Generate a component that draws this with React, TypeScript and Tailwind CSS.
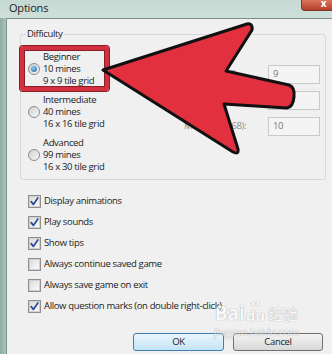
import React from "react";

function Radio({ checked }: { checked?: boolean }) {
  return (
    <span className="flex h-[12px] w-[12px] shrink-0 items-center justify-center rounded-full border border-[#8c8c8c] bg-gradient-to-br from-[#cfcfcf] to-[#f9f9f9]">
      {checked && (
        <span className="h-[6px] w-[6px] rounded-full bg-[radial-gradient(circle_at_40%_35%,#8fd0f5,#1a5a98)]" />
      )}
    </span>
  );
}

function Check({ checked }: { checked?: boolean }) {
  return (
    <span className="flex h-[13px] w-[13px] shrink-0 items-center justify-center border border-[#8f8f8f] bg-white">
      <span className="flex h-[11px] w-[11px] items-center justify-center border border-[#d0d0d0] bg-gradient-to-br from-[#dcdcdc] to-[#fbfbfb]">
        {checked && (
          <svg width="9" height="9" viewBox="0 0 9 9">
            <path d="M1.2 4.6 L3.4 7.4 L7.8 1" stroke="#2b4996" strokeWidth="1.7" fill="none" strokeLinecap="round" strokeLinejoin="round" />
          </svg>
        )}
      </span>
    </span>
  );
}

const levels = [
  { name: "Beginner", mines: "10 mines", grid: "9 x 9 tile grid", checked: true },
  { name: "Intermediate", mines: "40 mines", grid: "16 x 16 tile grid" },
  { name: "Advanced", mines: "99 mines", grid: "16 x 30 tile grid" },
];

const fields = [
  { label: "Height (9-24):", value: "9" },
  { label: "Width (9-30):", value: "" },
  { label: "Mines (10-668):", value: "10" },
];

const options = [
  { label: "Display animations", checked: true },
  { label: "Play sounds", checked: true },
  { label: "Show tips", checked: true },
  { label: "Always continue saved game" },
  { label: "Always save game on exit" },
  { label: "Allow question marks (on double right-click)", checked: true },
];

export default function App() {
  return (
    <div className="relative h-[354px] w-[332px] overflow-hidden bg-[#b7cec8] font-['Open_Sans',sans-serif] text-[9.5px] tracking-[-0.35px] text-[#1b1b1b]">
      {/* title bar */}
      <div className="relative h-[18px] bg-gradient-to-b from-[#c6d9d3] to-[#cfe0db]">
        <span className="absolute left-[9px] top-[1px] text-[11px] leading-[13px] tracking-[-0.2px] text-[#222]">Options</span>
        <div className="absolute -right-[14px] top-0 flex h-[11px] w-[45px] justify-center rounded-b-[4px] border border-t-0 border-[#7a3a30] bg-gradient-to-b from-[#d9745f] to-[#b83c28]">
          <span className="-mt-[2px] text-[10px] font-bold leading-[11px] text-white">x</span>
        </div>
      </div>

      <div className="flex h-[336px]">
        <div className="w-[6px] bg-gradient-to-r from-[#8eaca3] to-[#a8c4bb]" />
        <div className="flex-1 border-l border-t border-[#7d8e8a] bg-[#f0f0f0]">
          {/* difficulty group */}
          <div className="relative ml-[13px] mr-[6px] mt-[15px] flex h-[146px] rounded-[3px] border border-[#d5dadd]">
            <span className="absolute -top-[7px] left-[5px] bg-[#f0f0f0] px-[1px] leading-[12px]">Difficulty</span>
            <div className="flex flex-col gap-[7px] pl-[7px] pt-[16px]">
              {levels.map((l) => (
                <div key={l.name} className="flex items-center gap-[3px]">
                  <Radio checked={l.checked} />
                  <div className="leading-[12px]">
                    <div>{l.name}</div>
                    <div>{l.mines}</div>
                    <div>{l.grid}</div>
                  </div>
                </div>
              ))}
            </div>
            <div className="ml-auto mr-[5px] flex flex-col gap-[7px] pt-[30px]">
              {fields.map((f) => (
                <div key={f.label} className="flex items-center">
                  <span className="w-[84px] text-[#8c8c8c]">{f.label}</span>
                  <div className="flex h-[19px] w-[52px] items-center border border-[#c9c9c9] bg-[#f4f4f4] pl-[4px] text-[#7a7a7a]">
                    {f.value}
                  </div>
                </div>
              ))}
            </div>
          </div>

          {/* options */}
          <div className="mt-[11px] pl-[21px]">
            {options.map((o) => (
              <div key={o.label} className="flex h-[21px] items-center gap-[3px]">
                <Check checked={o.checked} />
                <span>{o.label}</span>
              </div>
            ))}
          </div>

          {/* buttons */}
          <div className="mt-[16px] flex justify-end gap-[9px] pr-[9px]">
            <button className="h-[18px] w-[91px] rounded-[3px] border border-[#3c7fb1] bg-gradient-to-b from-[#eaf6fd] to-[#c4e4f7] leading-[16px]">
              OK
            </button>
            <button className="h-[18px] w-[90px] rounded-[3px] border border-[#707070] bg-gradient-to-b from-[#f4f4f4] to-[#d8d8d8] leading-[16px]">
              Cancel
            </button>
          </div>
        </div>
      </div>

      {/* highlight box */}
      <div className="absolute left-[20px] top-[46px] h-[45px] w-[89px] rounded-[3px] border-[4px] border-[#d3303f] shadow-[0_0_0_1px_#8b1d28,inset_0_0_0_1px_#8b1d28]" />

      {/* arrow */}
      <svg className="absolute left-0 top-0" width="332" height="354" viewBox="0 0 332 354">
        <path
          d="M103 70 L247 24 Q253 23 252 30 L226 71 L289 85 Q295 87 294 97 Q293 107 287 108 L224 104 L238 149 Q239 155 233 152 Z"
          fill="#e2303f"
          stroke="#111"
          strokeWidth="3"
          strokeLinejoin="round"
        />
      </svg>

      {/* watermark */}
      <div className="absolute left-[214px] top-[298px] flex flex-col items-center tracking-normal text-white opacity-60 [text-shadow:0_0_1px_#8a8a8a,0_0_1px_#8a8a8a]">
        <div className="flex items-end gap-[1px]">
          <span className="text-[19px] font-bold leading-[20px]">Bai</span>
          <span className="flex flex-col items-center">
            <span className="text-[8px] leading-[9px]">●●</span>
            <span className="text-[15px] font-bold leading-[16px]">du</span>
          </span>
          <span className="ml-[2px] font-['Noto_Sans_CJK_SC',sans-serif] text-[15px] leading-[18px]">经验</span>
        </div>
        <span className="mt-[4px] text-[10px] leading-[10px]">jingyan.baidu.com</span>
      </div>
    </div>
  );
}
